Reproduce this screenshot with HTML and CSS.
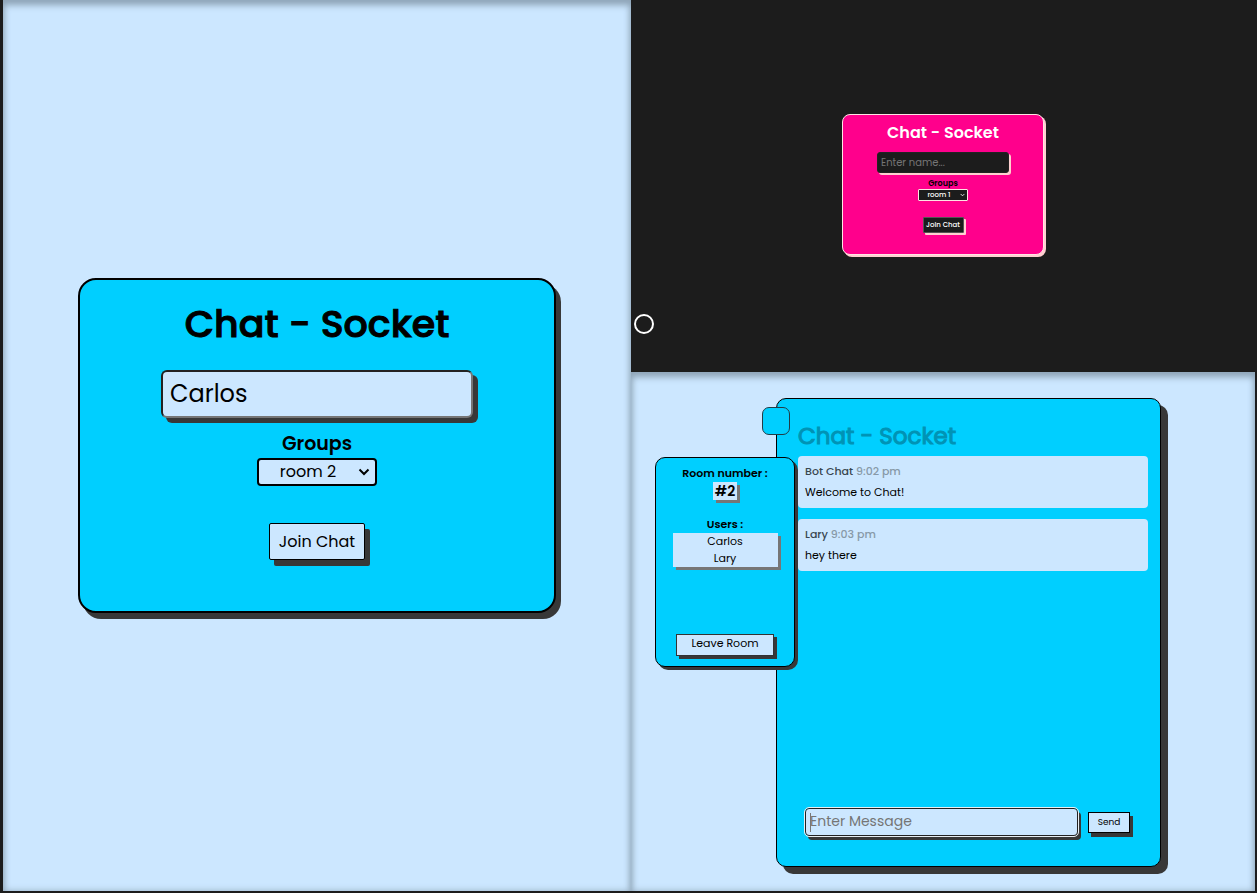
FILE: index.html
```html
<!DOCTYPE html>
<html lang="en">
<head>
<meta charset="utf-8">
<meta name="viewport" content="width=device-width, initial-scale=1">
<title>Chat - Socket</title>
<link rel="stylesheet" href="styles.css">
</head>
<body>
<main class="board">
  <section class="screen screen-join">
    <form class="card">
      <h1 class="title">Chat - Socket</h1>
      <input class="name" type="text" value="Carlos" aria-label="Name">
      <label class="label" for="room-a">Groups</label>
      <div class="picker">
        <select class="room" id="room-a"><option>room 1</option><option selected>room 2</option></select>
        <svg class="chevron" viewBox="0 0 12 8" aria-hidden="true"><path d="M1.500 1.500 6 6l4.500-4.500"/></svg>
      </div>
      <button class="join" type="button">Join Chat</button>
    </form>
  </section>

  <section class="screen screen-dark">
    <form class="card card-dark">
      <h2 class="title">Chat - Socket</h2>
      <input class="name" type="text" placeholder="Enter name..." aria-label="Name">
      <label class="label" for="room-b">Groups</label>
      <div class="picker">
        <select class="room" id="room-b"><option selected>room 1</option><option>room 2</option></select>
        <svg class="chevron" viewBox="0 0 12 8" aria-hidden="true"><path d="M1.500 1.500 6 6l4.500-4.500"/></svg>
      </div>
      <button class="join" type="button">Join Chat</button>
    </form>
    <button class="theme" type="button" aria-label="Switch theme"></button>
  </section>

  <section class="screen screen-chat">
    <aside class="sidebar">
      <h3 class="side-title">Room number :</h3>
      <strong class="room-number">#2</strong>
      <h3 class="side-title side-users">Users :</h3>
      <ul class="users"><li>Carlos</li><li>Lary</li></ul>
      <button class="leave" type="button">Leave Room</button>
    </aside>
    <div class="chat">
      <button class="toggle" type="button" aria-label="Toggle sidebar"></button>
      <h2 class="chat-title">Chat - Socket</h2>
      <div class="messages">
        <article class="message">
          <p class="meta">Bot Chat <time>9:02 pm</time></p>
          <p>Welcome to Chat!</p>
        </article>
        <article class="message">
          <p class="meta">Lary <time>9:03 pm</time></p>
          <p>hey there</p>
        </article>
      </div>
      <form class="composer">
        <div class="entry">
          <input class="entry-input" type="text" placeholder="Enter Message" aria-label="Message">
          <span class="caret"></span>
        </div>
        <button class="send" type="button">Send</button>
      </form>
    </div>
  </section>
</main>
</body>
</html>
```
FILE: styles.css
```css
:root {
  --ink: #1c1c1c;
  --pale: #cce7ff;
  --cyan: #00cfff;
  --shade: #383838;
}
* { box-sizing: border-box; }
body {
  margin: 0;
  background: var(--ink);
  color: #000;
  font-family: Poppins, Inter, "Open Sans", sans-serif;
}
h1, h2, h3, p, ul { margin: 0; padding: 0; }
input, select, button { font: inherit; color: inherit; margin: 0; }
button { padding: 0; }

.board {
  display: grid;
  grid-template-columns: 628fr 624fr;
  grid-template-rows: 372fr 519fr;
  min-height: 100vh;
  padding: 0 2px 2px 3px;
}
.screen { display: flex; align-items: center; justify-content: center; position: relative; }
.screen-join, .screen-chat {
  background: var(--pale);
  box-shadow: inset 0 5px 7px #8fa5b8, inset 0 0 7px #9db4c7;
}
.screen-join { grid-row: 1 / 3; }

.card {
  display: flex;
  flex-direction: column;
  align-items: center;
  width: 478px;
  padding: 18px 0 51px;
  background: var(--cyan);
  border: 2px solid #000;
  border-radius: 18px;
  box-shadow: 5px 6px 0 var(--shade);
}
.title { font-size: 38px; line-height: 52px; font-weight: 500; -webkit-text-stroke: 1px currentColor; }
.name {
  width: 312px;
  height: 48px;
  margin-top: 20px;
  padding: 0 7px 2px;
  font-size: 24px;
  background: var(--pale);
  border: 2px solid;
  border-color: #222 #767676 #767676 #222;
  border-radius: 6px;
  box-shadow: 5px 5px 0 var(--shade);
}
.label { margin-top: 12px; font-size: 19px; line-height: 28px; font-weight: 600; }
.picker { display: grid; align-items: center; width: 120px; }
.picker > * { grid-area: 1 / 1; }
.room {
  appearance: none;
  width: 100%;
  height: 28px;
  padding: 0 20px 0 2px;
  font-size: 16px;
  line-height: 20px;
  text-align: center;
  background: var(--pale);
  border: 2px solid #000;
  border-radius: 4px;
}
.chevron {
  justify-self: end;
  width: 12px;
  height: 8px;
  margin-right: 7px;
  fill: none;
  stroke: currentColor;
  stroke-width: 2;
  pointer-events: none;
}
.join {
  width: 96px;
  height: 37px;
  margin-top: 37px;
  font-size: 16px;
  background: var(--pale);
  border: 1px solid #000;
  border-radius: 2px;
  box-shadow: 5px 6px 0 var(--shade);
}

.screen-dark { background: var(--ink); padding-bottom: 3px; }
.card-dark {
  width: 202px;
  padding: 7px 0 21px;
  background: #ff008c;
  border: 1px solid #ffe4e4;
  border-radius: 8px;
  box-shadow: 2px 2px 0 #ffd0d0;
}
.card-dark .title { font-size: 16px; line-height: 22px; font-weight: 600; color: #fff; -webkit-text-stroke: 0; }
.card-dark .name {
  width: 132px;
  height: 21px;
  margin-top: 8px;
  padding: 0 3px;
  font-size: 10px;
  color: #fff;
  background: var(--ink);
  border: 1px solid #222;
  border-radius: 3px;
  box-shadow: 2px 2px 0 #ffd0d0;
}
.card-dark .name::placeholder { color: #757575; }
.card-dark .label { margin-top: 5px; font-size: 8px; line-height: 11px; }
.card-dark .picker { width: 50px; color: #fff; }
.card-dark .room {
  height: 12px;
  padding: 0 8px 0 0;
  font-size: 7px;
  line-height: 10px;
  font-weight: 500;
  background: var(--ink);
  border: 1px solid #ffe4e4;
  border-radius: 1px;
}
.card-dark .chevron { width: 5px; height: 4px; margin-right: 3px; }
.card-dark .join {
  width: 41px;
  height: 16px;
  margin-top: 16px;
  font-size: 7px;
  font-weight: 500;
  color: #fff;
  background: var(--ink);
  border: 1px solid #555;
  border-radius: 1px;
  box-shadow: 2px 2px 0 #ffd0d0;
}
.theme {
  position: absolute;
  left: 3px;
  bottom: 38px;
  width: 20px;
  height: 20px;
  background: none;
  border: 2px solid #fff;
  border-radius: 50%;
}

.screen-chat { align-items: stretch; padding: 26px 94px 24px 24px; }
.sidebar {
  z-index: 1;
  display: flex;
  flex-direction: column;
  align-items: center;
  align-self: flex-start;
  width: 140px;
  height: 210px;
  margin: 59px -19px 0 0;
  padding: 7px 0 10px;
  background: var(--cyan);
  border: 1px solid #000;
  border-radius: 10px;
  box-shadow: 3px 3px 0 var(--shade);
}
.side-title { font-size: 11px; line-height: 17px; font-weight: 600; }
.room-number {
  padding: 0 2px;
  font-size: 14px;
  line-height: 18px;
  font-weight: 600;
  background: var(--pale);
  box-shadow: 3px 3px 0 #767676;
}
.side-users { margin-top: 16px; }
.users {
  width: 105px;
  list-style: none;
  text-align: center;
  font-size: 11px;
  line-height: 17px;
  background: var(--pale);
  box-shadow: 3px 3px 0 #767676;
}
.leave {
  width: 98px;
  height: 22px;
  margin-top: auto;
  padding-bottom: 3px;
  font-size: 11px;
  background: var(--pale);
  border: 1px solid #333;
  box-shadow: 3px 3px 0 var(--shade);
}
.chat {
  position: relative;
  display: flex;
  flex: 1;
  flex-direction: column;
  padding: 22px 12px 30px 21px;
  background: var(--cyan);
  border: 1px solid #000;
  border-radius: 10px;
  box-shadow: 7px 7px 0 var(--shade);
}
.toggle {
  position: absolute;
  top: 8px;
  left: -15px;
  width: 28px;
  height: 28px;
  background: var(--cyan);
  border: 1px solid #223c46;
  border-radius: 7px;
}
.chat-title { font-size: 23px; line-height: 30px; font-weight: 400; color: #0093b5; -webkit-text-stroke: 1px currentColor; }
.messages { display: grid; gap: 11px; margin-top: 5px; }
.message {
  padding: 5px 7px;
  font-size: 11px;
  line-height: 21px;
  background: var(--pale);
  border-radius: 4px;
}
.meta { font-weight: 500; color: #39464f; }
.meta time { color: #8799a7; }
.composer { display: flex; align-items: center; gap: 10px; margin-top: auto; padding: 0 18px 0 7px; }
.entry { position: relative; flex: 1; }
.entry-input {
  display: block;
  width: 100%;
  height: 28px;
  padding: 0 4px 2px;
  font-size: 14px;
  background: var(--pale);
  border: 1px solid #222;
  border-radius: 4px;
  outline: 1px solid #e8eef2;
  box-shadow: 3px 4px 0 var(--shade);
}
.entry-input::placeholder { color: #757575; }
.caret { position: absolute; top: 5px; left: 5px; width: 1px; height: 19px; background: #777; }
.send {
  width: 42px;
  height: 21px;
  font-size: 9px;
  background: var(--pale);
  border: 1px solid #000;
  box-shadow: 3px 4px 0 var(--shade);
}
```
